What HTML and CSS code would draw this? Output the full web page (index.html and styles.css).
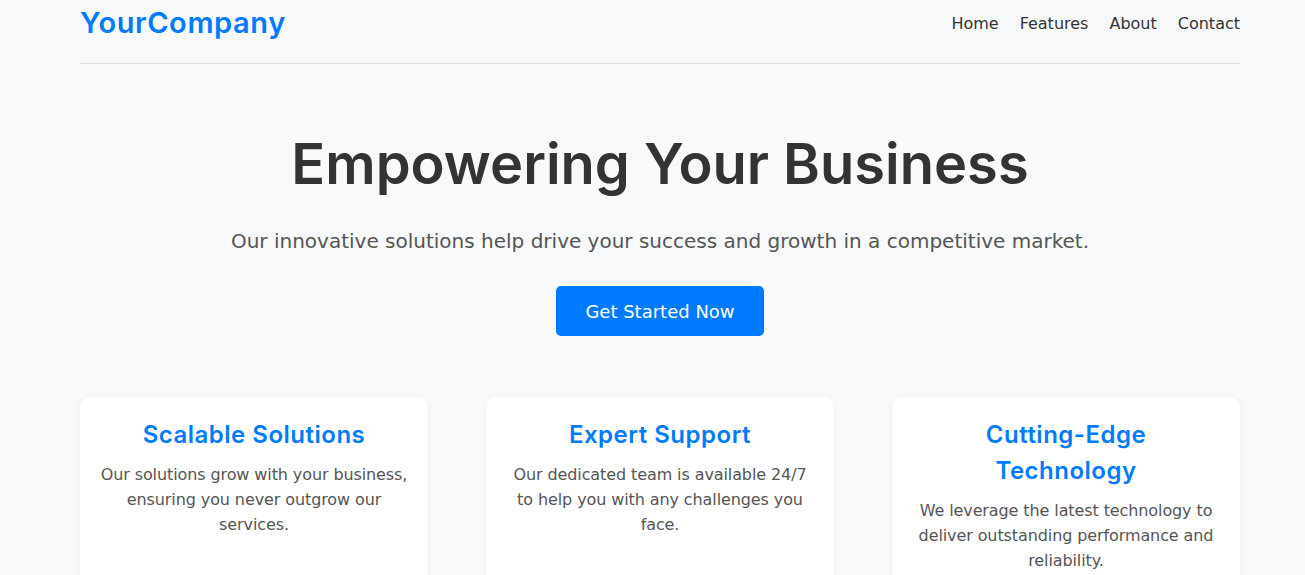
FILE: index.html
```html
<!DOCTYPE html>
<html lang="en">
<head>
    <meta charset="UTF-8">
    <meta name="viewport" content="width=device-width, initial-scale=1.0">
    <title>YourCompany</title>
    <link rel="stylesheet" href="styles.css">
</head>
<body>
    <div class="container">
        <header class="site-header">
            <a href="#" class="logo">YourCompany</a>
            <nav class="nav">
                <a href="#">Home</a>
                <a href="#">Features</a>
                <a href="#">About</a>
                <a href="#">Contact</a>
            </nav>
        </header>

        <!-- Hero -->
        <section class="hero">
            <h1>Empowering Your Business</h1>
            <p>Our innovative solutions help drive your success and growth in a competitive market.</p>
            <a href="#" class="btn">Get Started Now</a>
        </section>

        <!-- Features -->
        <section class="features">
            <div class="card">
                <h3>Scalable Solutions</h3>
                <p>Our solutions grow with your business, ensuring you never outgrow our services.</p>
            </div>
            <div class="card">
                <h3>Expert Support</h3>
                <p>Our dedicated team is available 24/7 to help you with any challenges you face.</p>
            </div>
            <div class="card">
                <h3>Cutting-Edge Technology</h3>
                <p>We leverage the latest technology to deliver outstanding performance and reliability.</p>
            </div>
        </section>
    </div>
</body>
</html>
```

FILE: styles.css
```css
body {
    margin: 0;
    padding: 0 0 0 15px;
    font-family: "DejaVu Sans", Arial, sans-serif;
    background-color: #f8f9fa;
    color: #333;
}

.container {
    width: 1160px;
    margin: 0 auto;
}

/* Cabecera */
.site-header {
    display: flex;
    justify-content: space-between;
    align-items: center;
    height: 44px;
    padding-bottom: 19px;
    border-bottom: 1px solid #ddd;
}

.logo {
    font-family: Inter, "Noto Sans", sans-serif;
    font-size: 29px;
    font-weight: 600;
    letter-spacing: 0.6px;
    color: #007bff;
    text-decoration: none;
}

.nav {
    display: flex;
    gap: 21px;
    padding-top: 2px;
}

.nav a {
    font-size: 16px;
    color: #333;
    text-decoration: none;
}

/* Hero */
.hero {
    text-align: center;
    padding-top: 67px;
}

.hero h1 {
    margin: 0;
    font-family: Inter, "Noto Sans", sans-serif;
    font-size: 56px;
    line-height: 67px;
    font-weight: 600;
    color: #333;
}

.hero p {
    margin: 28px 0 30px;
    font-size: 20px;
    line-height: 30px;
    color: #555;
}

.btn {
    display: inline-block;
    padding: 0 29px;
    height: 50px;
    line-height: 51px;
    font-size: 18px;
    color: white;
    background-color: #007bff;
    border-radius: 5px;
    text-decoration: none;
}

/* Tarjetas */
.features {
    display: grid;
    grid-template-columns: repeat(3, 1fr);
    gap: 58px;
    margin-top: 61px;
}

.card {
    background-color: #fff;
    border-radius: 10px;
    padding: 20px;
    text-align: center;
    box-shadow: 0 2px 10px rgba(0, 0, 0, 0.05);
}

.card h3 {
    margin: 0 10px 9px;
    font-family: Inter, "Noto Sans", sans-serif;
    font-size: 24px;
    line-height: 36px;
    font-weight: 600;
    letter-spacing: 0.5px;
    color: #007bff;
}

.card p {
    margin: 0;
    font-size: 16px;
    line-height: 25px;
    letter-spacing: -0.1px;
    color: #555;
}
```
